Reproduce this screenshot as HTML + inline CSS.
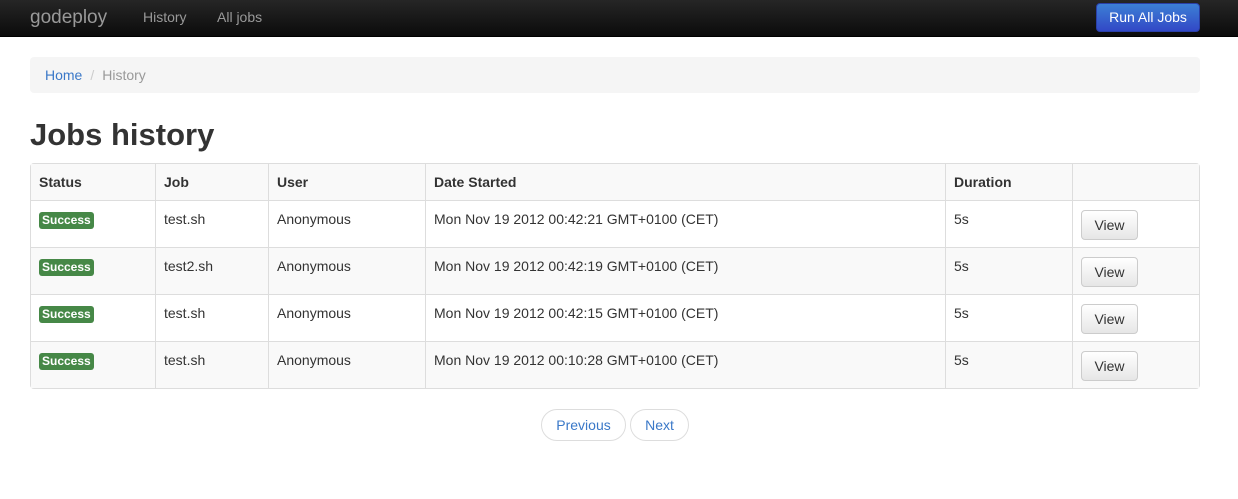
<!DOCTYPE html>
<html><head><style>
*{box-sizing:border-box;margin:0;padding:0}
body{width:1238px;height:499px;background:#fff;font-family:"Liberation Sans",Arial,sans-serif;font-size:14px;color:#333;position:relative;overflow:hidden}
.nav{position:absolute;left:0;top:0;width:1238px;height:37px;background:linear-gradient(#262626,#0b0b0b);border-bottom:1px solid #000}
.brand{position:absolute;left:30px;top:7px;font-size:19px;color:#999}
.nl{position:absolute;top:9px;font-size:14px;color:#999}
.run{position:absolute;left:1096px;top:3px;width:104px;height:29px;border-radius:4px;background:linear-gradient(#3c7fd5,#3248c6);border:1px solid #2a3fa8;color:#fff;font-size:14px;text-align:center;line-height:27px}
.bc{position:absolute;left:30px;top:57px;width:1170px;height:36px;background:#f5f5f5;border-radius:4px;padding:10px 15px;line-height:16px}
.bc a{color:#3a78c8}.bc .s{color:#ccc;padding:0 8px}.bc .c{color:#999}
h1{position:absolute;left:30px;top:117px;font-size:31px;font-weight:bold;color:#333}
table{position:absolute;left:30px;top:163px;width:1170px;border-collapse:separate;border-spacing:0;border:1px solid #ddd;border-radius:4px;table-layout:fixed}
td,th{border-left:1px solid #ddd;border-top:1px solid #ddd;padding:0 8px;text-align:left;vertical-align:top}
tr td:first-child,tr th:first-child{border-left:none}
th{height:36px;line-height:36px;font-weight:bold;border-top:none;background:#f9f9f9}
td{height:47px;padding-top:10px}
tr.g td{background:#f9f9f9}
.lbl{display:inline-block;background:#468847;color:#fff;font-weight:bold;font-size:12px;border-radius:3px;padding:0 3px;line-height:17px;margin-top:1px}
.v{display:inline-block;width:57px;height:30px;border:1px solid #ccc;border-radius:4px;background:linear-gradient(#fff,#e6e6e6);text-align:center;line-height:28px;margin-top:-1px}
.pg{position:absolute;top:409px;height:32px;border:1px solid #ddd;border-radius:16px;color:#3a78c8;text-align:center;line-height:30px}
</style></head><body>
<div class="nav"><span class="brand">godeploy</span><span class="nl" style="left:143px">History</span><span class="nl" style="left:217px">All jobs</span><div class="run">Run All Jobs</div></div>
<div class="bc"><a>Home</a><span class="s">/</span><span class="c">History</span></div>
<h1>Jobs history</h1>
<table>
<colgroup><col style="width:124px"><col style="width:113px"><col style="width:157px"><col style="width:520px"><col style="width:127px"><col></colgroup>
<tr><th>Status</th><th>Job</th><th>User</th><th>Date Started</th><th>Duration</th><th></th></tr>
<tr><td><span class="lbl">Success</span></td><td>test.sh</td><td>Anonymous</td><td>Mon Nov 19 2012 00:42:21 GMT+0100 (CET)</td><td>5s</td><td><span class="v">View</span></td></tr>
<tr class="g"><td><span class="lbl">Success</span></td><td>test2.sh</td><td>Anonymous</td><td>Mon Nov 19 2012 00:42:19 GMT+0100 (CET)</td><td>5s</td><td><span class="v">View</span></td></tr>
<tr><td><span class="lbl">Success</span></td><td>test.sh</td><td>Anonymous</td><td>Mon Nov 19 2012 00:42:15 GMT+0100 (CET)</td><td>5s</td><td><span class="v">View</span></td></tr>
<tr class="g"><td><span class="lbl">Success</span></td><td>test.sh</td><td>Anonymous</td><td>Mon Nov 19 2012 00:10:28 GMT+0100 (CET)</td><td>5s</td><td><span class="v">View</span></td></tr>
</table>
<div class="pg" style="left:541px;width:85px">Previous</div>
<div class="pg" style="left:630px;width:59px">Next</div>
</body></html>
